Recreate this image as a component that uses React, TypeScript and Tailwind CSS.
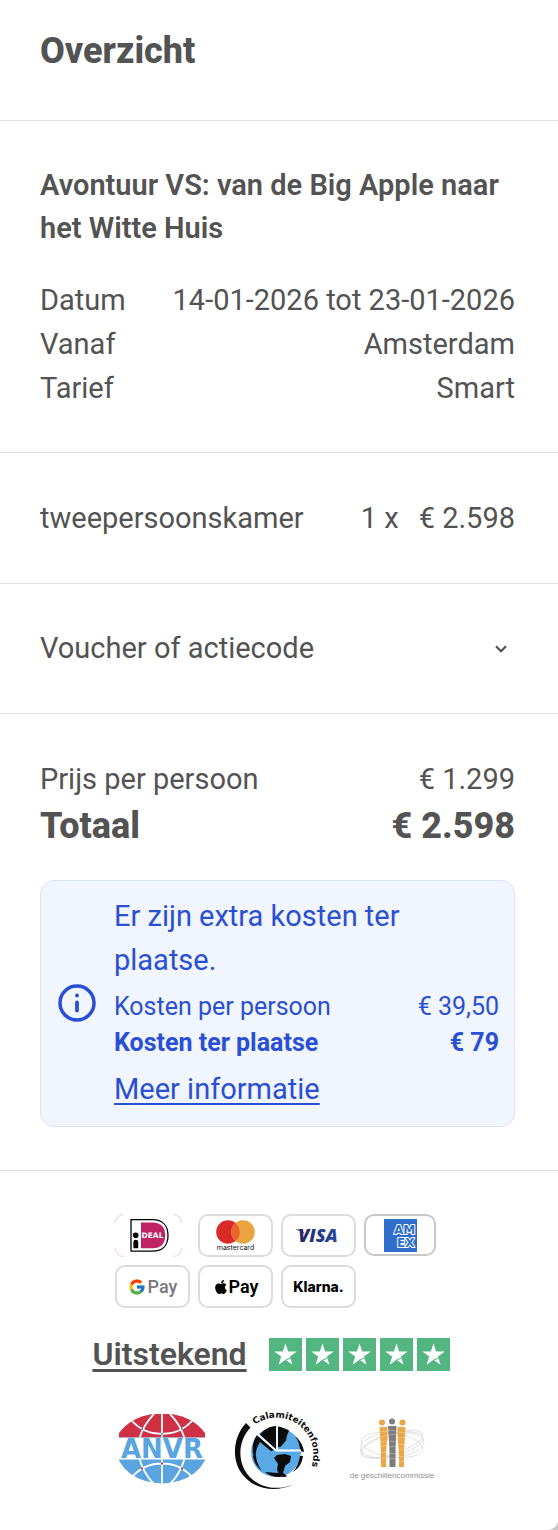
import React from "react";
import { FcGoogle } from "react-icons/fc";
import { FaApple } from "react-icons/fa";

const Row = ({ label, value }: { label: string; value: string }) => (
  <div className="flex justify-between">
    <dt>{label}</dt>
    <dd>{value}</dd>
  </div>
);

const PayCard = ({ children }: { children: React.ReactNode }) => (
  <li className="flex h-[43px] w-[75px] items-center justify-center rounded-[10px] border-2 border-[#dcdcdc] bg-white">
    {children}
  </li>
);

const Ideal = () => (
  <svg viewBox="0 0 67 43" className="h-[43px] w-[67px]" role="img" aria-label="iDEAL">
    <path
      d="M.5 8.500A8 8 0 0 1 8.500.5M58.500.5A8 8 0 0 1 66.500 8.500M66.500 34.500A8 8 0 0 1 58.500 42.500M8.500 42.500A8 8 0 0 1 .5 34.500"
      fill="none"
      stroke="#f0c4d7"
      strokeWidth="1"
    />
    <path
      d="M16 5.600h21.500c10 0 15.500 6 15.500 15.900S47.500 37.200 37.500 37.200H16z"
      fill="#fff"
      stroke="#000"
      strokeWidth="1.300"
    />
    <path d="M26 8.500h11.500c8.500 0 12.700 5 12.700 13s-4.200 12.800-12.700 12.800H26z" fill="#bf2363" />
    <circle cx="20.700" cy="21.200" r="2.800" fill="#000" />
    <path d="M18.400 34.300v-6.100a2.400 2.400 0 0 1 4.800 0v6.100z" fill="#000" />
    <text x="26.500" y="24" fill="#fff" fontSize="7.500" className="font-['DejaVu_Sans'] font-bold">
      DEAL
    </text>
  </svg>
);

const Mastercard = () => (
  <svg viewBox="0 0 71 39" className="h-[39px] w-[71px]" role="img" aria-label="mastercard">
    <circle cx="28" cy="16" r="11.800" fill="#d92b27" />
    <circle cx="43" cy="16" r="11.800" fill="#eba340" />
    <path d="M35.500 6.900a11.800 11.800 0 0 1 0 18.200a11.800 11.800 0 0 1 0-18.200z" fill="#ec632a" />
    <text x="35.500" y="34" textAnchor="middle" fontSize="7" fill="#111" className="font-['Inter']">
      mastercard
    </text>
  </svg>
);

const Visa = () => (
  <svg viewBox="0 0 71 39" className="h-[39px] w-[71px]" role="img" aria-label="Visa">
    <defs>
      <linearGradient id="visa" x1="0" x2="1">
        <stop offset="0" stopColor="#22265f" />
        <stop offset="1" stopColor="#2a49a5" />
      </linearGradient>
    </defs>
    <path d="M13 13.500h6l2.500 4.500c-2-2-5-3.500-8.500-4z" fill="#22265f" />
    <text x="35" y="26" textAnchor="middle" fontSize="18" fill="url(#visa)" className="font-['Open_Sans'] font-extrabold italic">
      VISA
    </text>
  </svg>
);

const Amex = () => (
  <svg viewBox="0 0 33 33" className="h-[33px] w-[33px]" role="img" aria-label="American Express">
    <rect width="33" height="33" fill="#2f6fcb" />
    <g fill="#2f6fcb" stroke="#fff" strokeWidth="2" paintOrder="stroke" strokeLinejoin="round" fontSize="12" className="font-['DejaVu_Sans'] font-bold">
      <text x="10" y="14.500">AM</text>
      <text x="13" y="27.500">EX</text>
    </g>
  </svg>
);

const Star = () => (
  <svg viewBox="0 0 33 33" className="h-[33px] w-[33px]" aria-hidden="true">
    <rect width="33" height="33" fill="#53b681" />
    <path d="M16.500 5.500l2.700 8.100h8.600l-6.900 5 2.600 8.200-7-5-6.900 5 2.600-8.200-6.900-5h8.500z" fill="#fff" />
    <path d="M16.500 22l4.800-1.800" fill="none" stroke="#53b681" strokeWidth="1" />
  </svg>
);

const Anvr = () => (
  <svg viewBox="0 0 86 70" className="h-[70px] w-[86px]" role="img" aria-label="ANVR">
    <defs>
      <clipPath id="cap">
        <path d="M0 0h86v23.500H0zM0 45.500h86V70H0z" />
      </clipPath>
    </defs>
    <g clipPath="url(#cap)">
      <ellipse cx="43" cy="34.500" rx="45.500" ry="35" fill="#5aa5e0" />
      <path d="M-3 23.500C6 8 22 -.5 43 -.5s37 8.500 46 24z" fill="#d03043" />
      <path
        d="M43 0v70M35 0Q25 10 20.500 24M51 0Q61 10 65.500 24M13 7Q25 20 43 20T73 7M20.500 45Q25 60 35 70M65.500 45Q61 60 51 70M13 63Q25 49.500 43 49.500T73 63"
        fill="none"
        stroke="#fff"
        strokeWidth="1.800"
      />
    </g>
    <path d="M22 14h2v2h-2zM42 19h2v2h-2zM62 14h2v2h-2z" fill="#5aa5e0" />
    <path d="M22 53.500h2v2h-2zM42 48.500h2v2h-2zM62 53.500h2v2h-2z" fill="#d03043" />
    <text x="43" y="44" textAnchor="middle" fontSize="26" fill="#5aa5e0" className="font-['DejaVu_Sans'] font-bold">
      ANVR
    </text>
  </svg>
);

const Calamiteitenfonds = () => (
  <svg viewBox="0 0 88 86" className="h-[86px] w-[88px] overflow-visible" role="img" aria-label="Calamiteitenfonds">
    <defs>
      <path id="ring" d="M21.800 18.700A37 37 0 1 1 61.500 81" />
    </defs>
    <path d="M13 17l4.500 4.500C5 35 4 55 15 69c9 11 26 17 46 9.500C41 87 21 83 9.500 68.500-2 54 0 31 13 17z" fill="#0c0c0c" />
    <circle cx="43" cy="46" r="25" fill="#58a9e6" />
    <path d="M43 20v23.500L27 28.500C31 23.500 37 20 43 20z" fill="#0c0c0c" />
    <path d="M24 29l17 15-3 1-5-4-6-5c-4 6-5 12-4 20-5-9-4-20 1-27z" fill="#0c0c0c" />
    <path d="M45 20.500c4 .5 7 2 11 4l-2 5-1 5-5 6-3 1z" fill="#0c0c0c" />
    <path d="M44 49l8-1 6 2-1 6-5 4-2 7 4 3-2 1c-4 0-7-3-8-8l1-5-4-6z" fill="#0c0c0c" />
    <path d="M32 66l13 1 8 3c-8 2-15 1-21-4zM20 50c1 7 5 12 9 15-3-4-6-10-6-16zM62 30c5 4 8 9 9 16l-4-1c0-6-2-11-5-15zM67 50h3c-1 8-5 13-10 16 4-5 6-10 7-16z" fill="#0c0c0c" />
    <path d="M23 27l20 17.500h25M44 19v25" fill="none" stroke="#fff" strokeWidth="1.800" />
    <text fontSize="9" fill="#0c0c0c" className="font-['DejaVu_Sans'] font-bold">
      <textPath href="#ring">Calamiteitenfonds</textPath>
    </text>
  </svg>
);

const Geschillencommissie = () => (
  <svg viewBox="0 0 86 68" className="h-[68px] w-[86px]" role="img" aria-label="de geschillencommissie">
    <g fill="none" stroke="#d6d6d6" strokeWidth=".7">
      <ellipse cx="43" cy="30" rx="32" ry="11" transform="rotate(-14 43 30)" />
      <ellipse cx="43" cy="30" rx="32" ry="13" transform="rotate(-6 43 30)" />
      <ellipse cx="43" cy="30" rx="31" ry="12" transform="rotate(8 43 30)" />
      <ellipse cx="43" cy="29" rx="32" ry="10" transform="rotate(-18 43 29)" />
    </g>
    <g fill="#eba646">
      <circle cx="33" cy="7.500" r="3" />
      <circle cx="53.500" cy="7.500" r="3" />
      <path d="M30.500 12h8v10l-1.500 16v14h-5V36zM48.500 12h8l-1.500 24v16h-5V38l-1.500-16z" />
    </g>
    <g fill="#7d7d7d">
      <circle cx="43" cy="6.500" r="3" />
      <path d="M39 11h8.500l-1 25v16h-6V36z" />
    </g>
    <path
      d="M30 17l9-1M31 22l8-2M31 27l7-1M32 32l6-2M32 38l5-1M32 44l5-1M39 15l9 1M40 20l7-1M40 26l7 1M40 32l7-1M40 38l6 1M40 44l6-1M49 17l8 1M49 23l7-1M50 29l6 1M50 35l6-1M50 41l5 1M50 47l5-1"
      stroke="#fff"
      strokeWidth=".5"
      opacity=".6"
    />
    <text x="43" y="63" textAnchor="middle" fontSize="8" fill="#8f8f8f" className="font-['Liberation_Sans']">
      de geschillencommissie
    </text>
  </svg>
);

const App = () => {
  return (
    <div className="bg-[#c4c4c4]">
      <main className="w-full rounded-br-[10px] bg-white pb-[38px] font-['Roboto',sans-serif] text-[29px] leading-[44px] text-[#535353]">
        <header className="border-b border-[#e2e2e2] px-10 pt-[25px] pb-[43px]">
          <h1 className="text-[36px] leading-[52px] font-extrabold">Overzicht</h1>
        </header>

        <section className="border-b border-[#e2e2e2] pt-[43px] pr-[43px] pb-[42px] pl-10">
          <h2 className="mb-7 leading-[43px] font-semibold">
            Avontuur VS: van de Big Apple naar het Witte Huis
          </h2>
          <dl>
            <Row label="Datum" value="14-01-2026 tot 23-01-2026" />
            <Row label="Vanaf" value="Amsterdam" />
            <Row label="Tarief" value="Smart" />
          </dl>
        </section>

        <section className="flex justify-between border-b border-[#e2e2e2] py-[43px] pr-[43px] pl-10">
          <span>tweepersoonskamer</span>
          <span className="flex gap-5">
            <span>1 x</span>
            <span>€ 2.598</span>
          </span>
        </section>

        <section className="border-b border-[#e2e2e2] py-[43px] pr-[43px] pl-10">
          <button type="button" className="flex w-full items-center justify-between pr-2 leading-[43px]">
            Voucher of actiecode
            <svg viewBox="0 0 12 8" className="h-2 w-3" aria-hidden="true">
              <path d="M1 1.200l5 5 5-5" fill="none" stroke="#535353" strokeWidth="2.200" />
            </svg>
          </button>
        </section>

        <section className="border-b border-[#e2e2e2] py-[43px] pr-[43px] pl-10">
          <dl>
            <Row label="Prijs per persoon" value="€ 1.299" />
            <div className="flex justify-between text-[36px] leading-[50px] font-extrabold">
              <dt>Totaal</dt>
              <dd>€ 2.598</dd>
            </div>
          </dl>

          <div className="mt-[29px] flex items-center gap-4 rounded-[14px] border border-[#dbe3fa] bg-[#f0f5fe] pt-[13px] pr-[15px] pb-[15px] pl-[17px] text-[#2a4fd4]">
            <svg viewBox="0 0 40 40" className="h-10 w-10 shrink-0" aria-hidden="true">
              <circle cx="19" cy="20" r="17" fill="none" stroke="currentColor" strokeWidth="3.500" />
              <circle cx="19" cy="12.500" r="1.900" fill="currentColor" />
              <path d="M19 19.500v8" stroke="currentColor" strokeWidth="3.800" strokeLinecap="round" />
            </svg>
            <div className="flex-1">
              <p>Er zijn extra kosten ter plaatse.</p>
              <dl className="mt-[7px] mb-[6px] text-[25px] leading-[36px]">
                <Row label="Kosten per persoon" value="€ 39,50" />
                <div className="flex justify-between font-bold">
                  <dt>Kosten ter plaatse</dt>
                  <dd>€ 79</dd>
                </div>
              </dl>
              <a href="#" className="block underline decoration-2 underline-offset-4">
                Meer informatie
              </a>
            </div>
          </div>
        </section>

        <footer className="flex flex-col items-center pt-[43px]">
          <ul className="flex w-[328px] flex-wrap gap-2">
            <li className="w-[75px]">
              <Ideal />
            </li>
            <PayCard>
              <Mastercard />
            </PayCard>
            <PayCard>
              <Visa />
            </PayCard>
            <li className="flex h-[42px] w-[72px] items-center justify-center rounded-[10px] border-2 border-[#c8c8c8]">
              <Amex />
            </li>
            <PayCard>
              <span className="flex items-center gap-0.5 text-[18px] leading-none font-medium text-[#77797d]">
                <FcGoogle className="h-[18px] w-[18px]" />
                Pay
              </span>
            </PayCard>
            <PayCard>
              <span className="flex items-center text-[18px] leading-none font-semibold text-black">
                <FaApple className="h-4 w-4" />
                Pay
              </span>
            </PayCard>
            <PayCard>
              <span className="font-['Inter'] text-[14px] leading-none font-extrabold text-black">Klarna.</span>
            </PayCard>
          </ul>

          <a href="#" className="mt-6 flex items-center gap-[22px] pr-4">
            <span className="text-[32px] font-semibold underline decoration-[3px] underline-offset-4">
              Uitstekend
            </span>
            <span className="flex gap-1" role="img" aria-label="5 sterren">
              <Star />
              <Star />
              <Star />
              <Star />
              <Star />
            </span>
          </a>

          <div className="mt-[30px] flex items-center gap-7 pr-1">
            <Anvr />
            <Calamiteitenfonds />
            <Geschillencommissie />
          </div>
        </footer>
      </main>
    </div>
  );
};

export default App;
